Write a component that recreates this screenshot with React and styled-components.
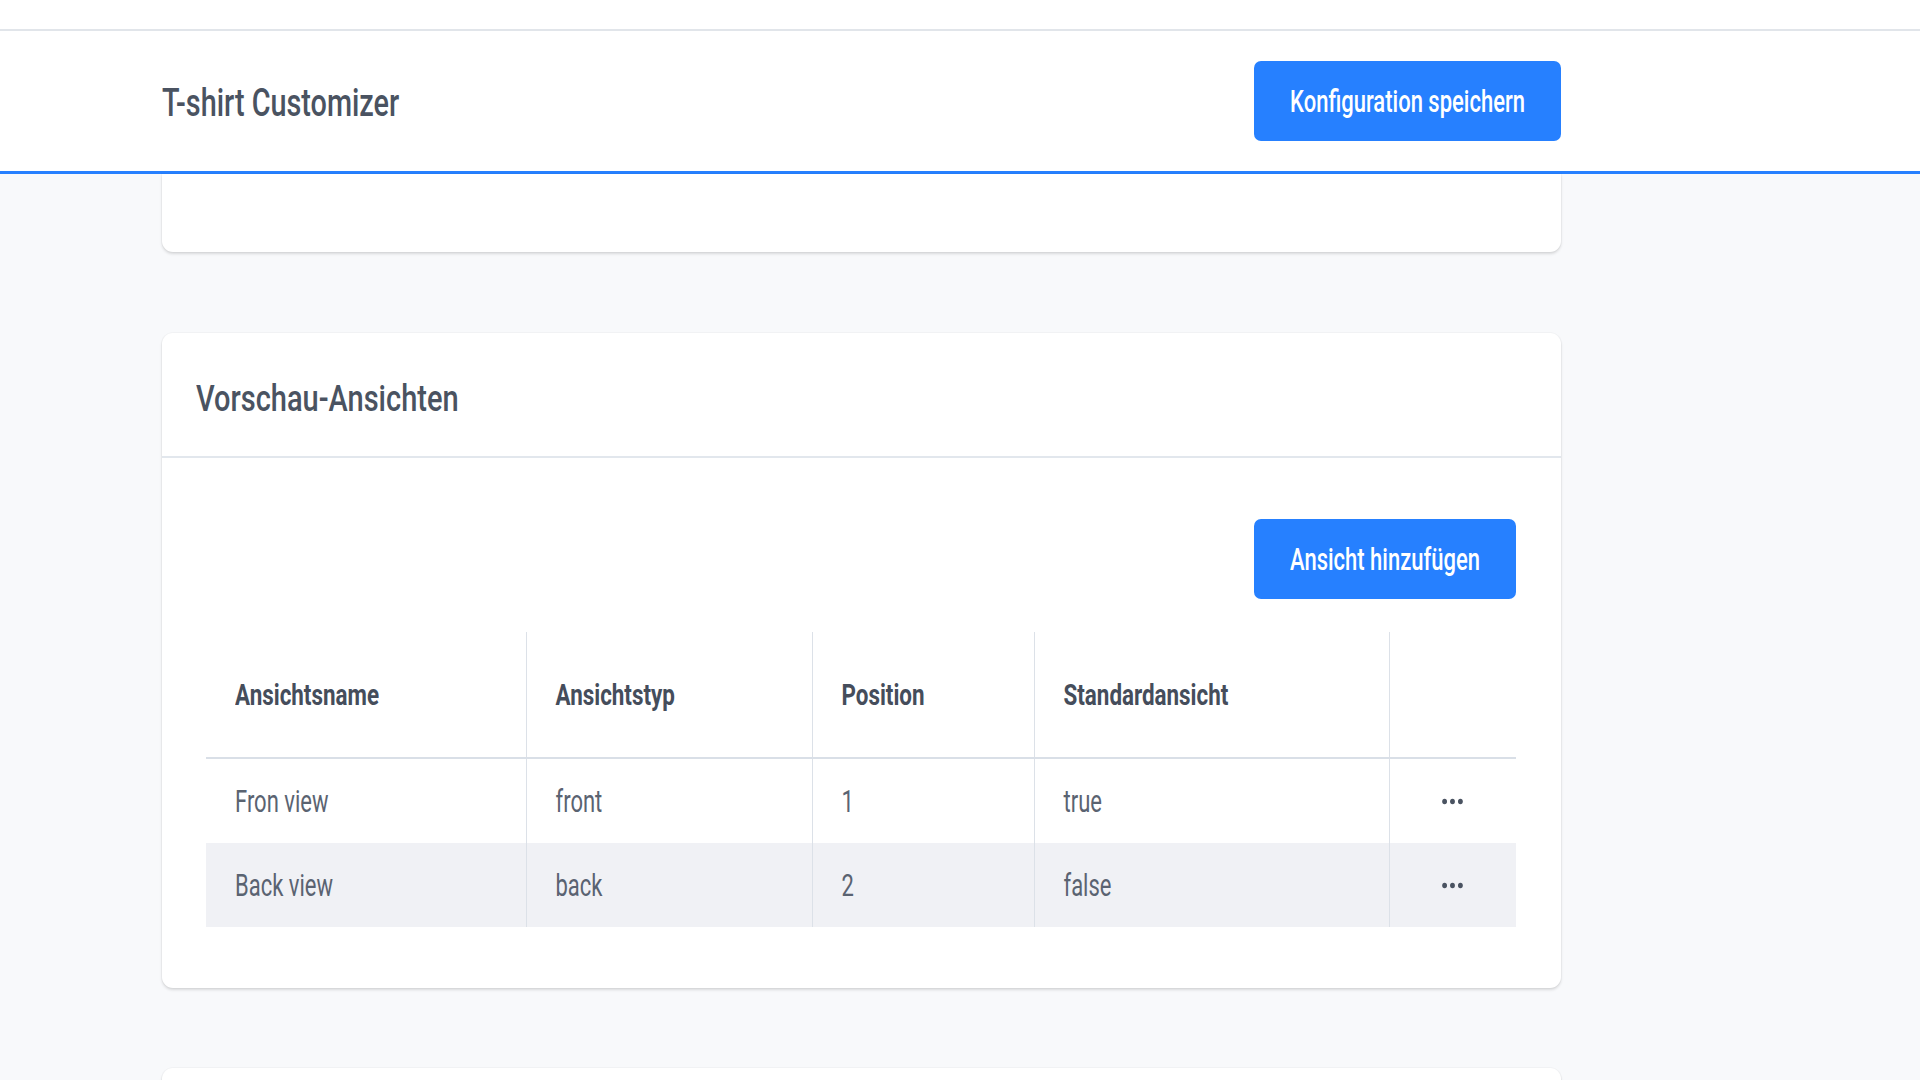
import React from 'react';
import styled, { createGlobalStyle } from 'styled-components';

const Global = createGlobalStyle`
  * { box-sizing: border-box; }
  html, body { margin: 0; padding: 0; background: #f8f9fb; }
  body {
    font-family: Roboto, "Noto Sans", "Liberation Sans", Arial, sans-serif;
    -webkit-font-smoothing: antialiased;
  }
`;

const Page = styled.div`
  height: 1080px;
  overflow: hidden;
  background: #f8f9fb;
`;

const TopStrip = styled.div`
  height: 31px;
  background: #ffffff;
  border-bottom: 2px solid #e1e5ea;
`;

const Header = styled.header`
  height: 143px;
  background: #ffffff;
  border-bottom: 3px solid #2680ff;
  display: flex;
  align-items: center;
  padding-left: 162px;
`;

const Container = styled.div`
  width: 1399px;
  display: flex;
  flex-direction: ${p => (p.$column ? 'column' : 'row')};
  align-items: ${p => (p.$column ? 'stretch' : 'center')};
  justify-content: space-between;
`;

const AppTitle = styled.h1`
  margin: 0;
  font-size: 28.8px;
  font-weight: 500;
  color: #4a5361;
  display: inline-block;
  white-space: nowrap;
  transform: scaleY(1.32);
  letter-spacing: 0;
  padding-top: 2px;
`;

const PrimaryButton = styled.button`
  width: ${p => p.$w}px;
  height: 80px;
  border: none;
  border-radius: 7px;
  background: #2680ff;
  color: #ffffff;
  font-family: inherit;
  cursor: pointer;
  display: flex;
  align-items: center;
  justify-content: center;
  padding: 0;
  align-self: ${p => p.$self || 'auto'};
`;

const ButtonLabel = styled.span`
  display: inline-block;
  font-size: 22px;
  font-weight: 500;
  white-space: nowrap;
  transform: scaleY(1.4);
`;

const Main = styled.main`
  padding-left: 162px;
`;

const Card = styled.section`
  background: #ffffff;
  border-radius: ${p => (p.$cut ? '0 0 11px 11px' : '11px')};
  box-shadow: 0 2px 3px rgba(0, 0, 0, 0.13), 0 0 0 1px rgba(0, 0, 0, 0.025);
  margin-top: ${p => p.$gap || 0}px;
  height: ${p => (p.$h ? `${p.$h}px` : 'auto')};
`;

const CardHead = styled.div`
  height: 125px;
  border-bottom: 2px solid #e2e7ed;
  display: flex;
  align-items: center;
  padding: 6px 0 0 34px;
`;

const CardTitle = styled.h2`
  margin: 0;
  font-size: 29px;
  font-weight: 500;
  color: #4a5361;
  display: inline-block;
  white-space: nowrap;
  transform: scaleY(1.26);
`;

const CardBody = styled.div`
  padding: 61px 45px 61px 44px;
  display: flex;
  flex-direction: column;
  gap: 33px;
`;

const Table = styled.table`
  width: 1310px;
  border-collapse: collapse;
  table-layout: fixed;
`;

const HeadCell = styled.th`
  height: 126px;
  padding: 0 0 0 29px;
  text-align: left;
  vertical-align: middle;
  border-bottom: 2px solid #d9dfe7;
  border-left: 1px solid #dce1e8;
  &:first-child { border-left: none; }
`;

const HeadLabel = styled.span`
  display: inline-block;
  font-size: 22.4px;
  font-weight: 700;
  color: #454d5b;
  white-space: nowrap;
  transform: scaleY(1.29);
`;

const Row = styled.tr`
  background: ${p => (p.$alt ? '#f0f1f5' : '#ffffff')};
`;

const Cell = styled.td`
  height: ${p => p.$h}px;
  padding: ${p => (p.$center ? '0' : '0 0 0 29px')};
  text-align: ${p => (p.$center ? 'center' : 'left')};
  vertical-align: middle;
  border-left: 1px solid #dce1e8;
  &:first-child { border-left: none; }
`;

const CellLabel = styled.span`
  display: inline-block;
  font-size: 22px;
  font-weight: 400;
  color: #5a6371;
  white-space: nowrap;
  transform: scaleY(1.4);
`;

const MoreButton = styled.button`
  border: none;
  background: transparent;
  padding: 0;
  cursor: pointer;
  display: inline-flex;
  align-items: center;
  justify-content: center;
  width: 30px;
  height: 20px;
`;

const Dots = () => (
  <svg width="21" height="7" viewBox="0 0 21 7" aria-hidden="true">
    <ellipse cx="2.6" cy="3.5" rx="2.4" ry="2.8" fill="#4a5361" />
    <ellipse cx="10.5" cy="3.5" rx="2.4" ry="2.8" fill="#4a5361" />
    <ellipse cx="18.4" cy="3.5" rx="2.4" ry="2.8" fill="#4a5361" />
  </svg>
);

const columns = [
  { label: 'Ansichtsname', w: 320 },
  { label: 'Ansichtstyp', w: 286 },
  { label: 'Position', w: 222 },
  { label: 'Standardansicht', w: 355 },
  { label: '', w: 127 },
];

const views = [
  { name: 'Fron view', type: 'front', pos: '1', def: 'true', h: 85 },
  { name: 'Back view', type: 'back', pos: '2', def: 'false', h: 84 },
];

export default function App() {
  return (
    <Page>
      <Global />
      <TopStrip />
      <Header>
        <Container>
          <AppTitle>T-shirt Customizer</AppTitle>
          <PrimaryButton $w={307}>
            <ButtonLabel>Konfiguration speichern</ButtonLabel>
          </PrimaryButton>
        </Container>
      </Header>
      <Main>
        <Container $column>
          <Card $cut $h={78} />
          <Card $gap={81}>
            <CardHead>
              <CardTitle>Vorschau-Ansichten</CardTitle>
            </CardHead>
            <CardBody>
              <PrimaryButton $w={262} $self="flex-end">
                <ButtonLabel>Ansicht hinzufügen</ButtonLabel>
              </PrimaryButton>
              <Table>
                <colgroup>
                  {columns.map((c, i) => (
                    <col key={i} style={{ width: c.w }} />
                  ))}
                </colgroup>
                <thead>
                  <tr>
                    {columns.map((c, i) => (
                      <HeadCell key={i}>
                        {c.label && <HeadLabel>{c.label}</HeadLabel>}
                      </HeadCell>
                    ))}
                  </tr>
                </thead>
                <tbody>
                  {views.map((v, i) => (
                    <Row key={v.name} $alt={i % 2 === 1}>
                      <Cell $h={v.h}><CellLabel>{v.name}</CellLabel></Cell>
                      <Cell $h={v.h}><CellLabel>{v.type}</CellLabel></Cell>
                      <Cell $h={v.h}><CellLabel>{v.pos}</CellLabel></Cell>
                      <Cell $h={v.h}><CellLabel>{v.def}</CellLabel></Cell>
                      <Cell $h={v.h} $center>
                        <MoreButton aria-label="Aktionen"><Dots /></MoreButton>
                      </Cell>
                    </Row>
                  ))}
                </tbody>
              </Table>
            </CardBody>
          </Card>
          <Card $gap={80} $h={400} />
        </Container>
      </Main>
    </Page>
  );
}
